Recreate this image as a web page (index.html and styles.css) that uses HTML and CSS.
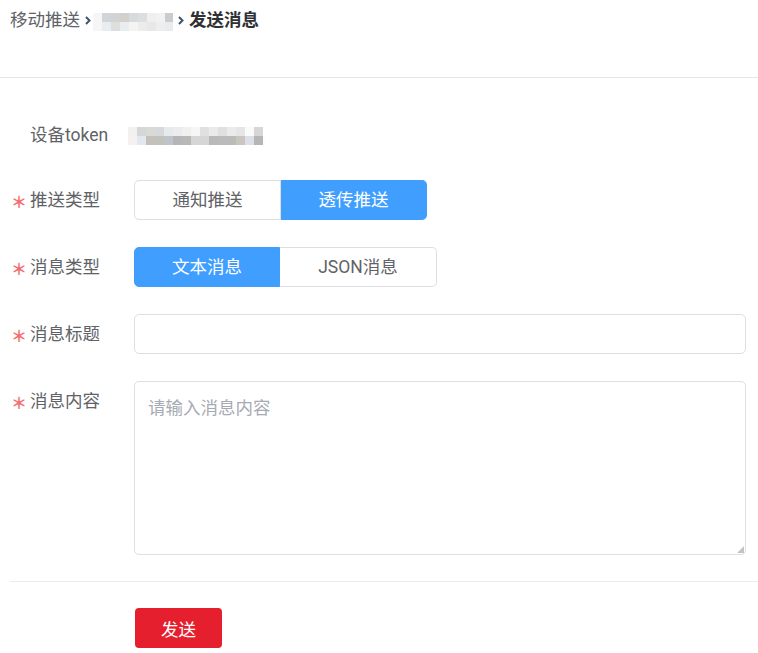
FILE: index.html
```html
<!DOCTYPE html>
<html lang="zh-CN">
<head>
<meta charset="utf-8">
<title>发送消息</title>
<link rel="stylesheet" href="styles.css">
</head>
<body>
<div class="header">
  <div class="crumbs">
    <span class="crumb">移动推送</span>
    <svg class="sep" width="6" height="9" viewBox="0 0 6 9"><path d="M1 1 L4.5 4.5 L1 8" fill="none" stroke="#3f556f" stroke-width="2"/></svg>
    <span class="mosaic mosaic-crumb"><span class="mrow r1"></span><span class="mrow r2"></span></span>
    <svg class="sep" width="6" height="9" viewBox="0 0 6 9"><path d="M1 1 L4.5 4.5 L1 8" fill="none" stroke="#3f556f" stroke-width="2"/></svg>
    <span class="crumb current">发送消息</span>
  </div>
</div>

<form class="form">
  <div class="item item-token">
    <label class="label"><span class="star"></span>设备token</label>
    <div class="control">
      <span class="mosaic mosaic-token"><span class="mrow t1"></span><span class="mrow t2"></span></span>
    </div>
  </div>

  <div class="item">
    <label class="label"><span class="star">＊</span>推送类型</label>
    <div class="control">
      <div class="radio-group">
        <span class="radio-btn w147">通知推送</span>
        <span class="radio-btn w146 active">透传推送</span>
      </div>
    </div>
  </div>

  <div class="item">
    <label class="label"><span class="star">＊</span>消息类型</label>
    <div class="control">
      <div class="radio-group">
        <span class="radio-btn w146 active">文本消息</span>
        <span class="radio-btn w157">JSON消息</span>
      </div>
    </div>
  </div>

  <div class="item">
    <label class="label"><span class="star">＊</span>消息标题</label>
    <div class="control">
      <input class="input" type="text">
    </div>
  </div>

  <div class="item item-area">
    <label class="label"><span class="star">＊</span>消息内容</label>
    <div class="control">
      <div class="area-wrap">
        <textarea class="textarea" placeholder="请输入消息内容"></textarea>
      </div>
    </div>
  </div>

  <div class="divider"></div>

  <div class="actions">
    <button type="button" class="btn-send">发送</button>
  </div>
</form>
</body>
</html>
```

FILE: styles.css
```css
* { box-sizing: border-box; }

body {
  margin: 0;
  background: #fff;
  font-family: Roboto, "Noto Sans CJK SC", sans-serif;
  font-size: 17.5px;
  color: #606266;
}

.header {
  height: 78px;
  border-bottom: 1px solid #e6e6e6;
}

.crumbs {
  display: flex;
  align-items: center;
  height: 40px;
  padding-left: 10px;
}

.crumb {
  line-height: 24px;
  color: #606266;
}

.crumb.current {
  color: #303133;
  font-weight: bold;
}

.sep {
  margin: 0 5px;
}

.mosaic {
  display: flex;
  flex-direction: column;
}

.mrow {
  display: block;
  height: 9px;
}

.mosaic-crumb {
  width: 80px;
  margin-top: 4px;
  margin-left: -3px;
}

.r1 {
  background: linear-gradient(to right,
    #f6f6f6 0 9px, #d0d5da 9px 18px, #d2d3d5 18px 27px, #d4d0cc 27px 36px,
    #d6dbe0 36px 45px, #dcdee0 45px 54px, #efefef 54px 63px, #f2f2f2 63px 72px, #cacdcf 72px 80px);
}

.r2 {
  background: linear-gradient(to right,
    #f6f6f6 0 9px, #e9edf0 9px 18px, #dededd 18px 27px, #eaedf0 27px 36px,
    #f5f4f0 36px 45px, #eaecee 45px 54px, #e8e8e8 54px 63px, #eeeeee 63px 72px, #ebebeb 72px 80px);
}

.form {
  padding: 37px 12px 0 10px;
}

.item {
  display: flex;
  align-items: flex-start;
  margin-bottom: 27px;
}

.item-token {
  margin-bottom: 25px;
}

.label {
  display: flex;
  align-items: center;
  width: 124px;
  height: 40px;
  flex-shrink: 0;
  padding-left: 2px;
  line-height: 40px;
  color: #606266;
  white-space: nowrap;
}

.star {
  display: inline-block;
  width: 18px;
  font-family: "Noto Sans CJK SC", sans-serif;
  font-size: 16px;
  font-weight: 700;
  line-height: 40px;
  color: #f56c6c;
  margin-top: 2px;
  margin-left: -1px;
  margin-right: 1px;
}

.control {
  flex: 1;
  min-height: 40px;
  display: flex;
  align-items: center;
}

.mosaic-token {
  width: 137px;
  margin-left: -6px;
  margin-top: 1px;
}

.t1 {
  background: linear-gradient(to right,
    #f1f1f1 0 9px, #d6d6d6 9px 18px, #d9d9d6 18px 27px, #d6d9da 27px 36px,
    #e8e9ea 36px 45px, #ececec 45px 54px, #f0f0f0 54px 63px, #f6f6f6 63px 72px,
    #e0e0e0 72px 81px, #eaeaea 81px 90px, #e0e0e0 90px 99px, #ebebeb 99px 108px,
    #e6e6e6 108px 117px, #fafafa 117px 126px, #d6d6d6 126px 135px, #fff 135px);
}

.t2 {
  background: linear-gradient(to right,
    #f5f1ee 0 9px, #e2e8ef 9px 18px, #c4c1bc 18px 27px, #c2c2bc 27px 36px,
    #bfc3ca 36px 45px, #b5b5b7 45px 54px, #b8b8b5 54px 63px, #d4d6d8 63px 72px,
    #d6d6d6 72px 81px, #b9b9b9 81px 90px, #bbbbbb 90px 99px, #bbbbbb 99px 108px,
    #c8c6be 108px 117px, #dce0e6 117px 126px, #b5b5b5 126px 135px, #fafcff 135px);
}

.radio-group {
  display: flex;
}

.radio-btn {
  display: block;
  height: 40px;
  line-height: 38px;
  text-align: center;
  border: 1px solid #dcdfe6;
  background: #fff;
  color: #606266;
  white-space: nowrap;
}

.radio-btn:first-child {
  border-radius: 5px 0 0 5px;
}

.radio-btn:last-child {
  border-radius: 0 5px 5px 0;
  border-left: 0;
}

.radio-btn.active {
  background: #409eff;
  border-color: #409eff;
  color: #fff;
}

.w146 { width: 146px; }
.w147 { width: 147px; }
.w157 { width: 157px; }

.input {
  display: block;
  width: 100%;
  height: 40px;
  border: 1px solid #dcdfe6;
  border-radius: 5px;
  outline: none;
  font: inherit;
  padding: 0 14px;
}

.area-wrap {
  position: relative;
  width: 100%;
}

.area-wrap::after {
  content: "";
  position: absolute;
  right: 2px;
  bottom: 2px;
  width: 0;
  height: 0;
  border-style: solid;
  border-width: 0 0 7px 7px;
  border-color: transparent transparent #c4c4c4 transparent;
}

.textarea {
  display: block;
  width: 100%;
  height: 174px;
  border: 1px solid #dcdfe6;
  border-radius: 5px;
  outline: none;
  resize: none;
  font: inherit;
  line-height: 25px;
  padding: 14px 13px;
  color: #606266;
}

.textarea::placeholder {
  color: #a6aab2;
}

.divider {
  height: 1px;
  background: #ebebeb;
  margin: -1px -12px 0 0;
}

.actions {
  padding: 26px 0 0 125px;
}

.btn-send {
  display: block;
  width: 87px;
  height: 40px;
  border: 0;
  border-radius: 4px;
  background: #e51f2e;
  color: #fff;
  font: inherit;
  cursor: pointer;
}
```
